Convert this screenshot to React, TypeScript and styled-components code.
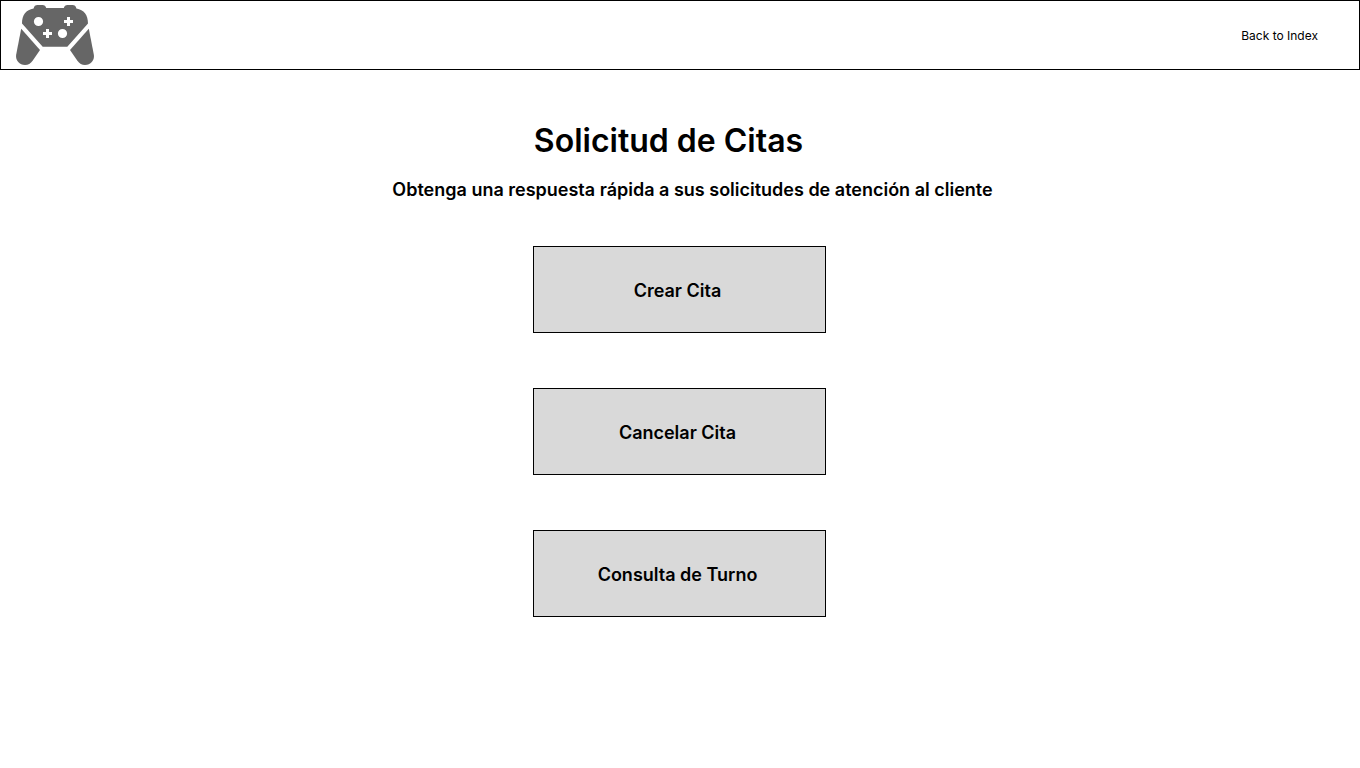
import React from "react";
import styled, { createGlobalStyle } from "styled-components";

const GlobalStyle = createGlobalStyle`
  *, *::before, *::after { box-sizing: border-box; }
  body {
    margin: 0;
    background: #fff;
    color: #000;
    font-family: Inter, "Liberation Sans", sans-serif;
  }
`;

const Header = styled.header`
  display: flex;
  align-items: center;
  justify-content: space-between;
  height: 70px;
  padding: 0 41px 0 14px;
  border: 1px solid #000;
`;

const Logo = styled.svg`
  display: block;
  width: 80px;
  height: 62px;
  fill: #666;
`;

const BackLink = styled.a`
  padding-top: 2px;
  font-size: 12px;
  line-height: 16px;
  color: inherit;
  text-decoration: none;
`;

const Main = styled.main`
  display: flex;
  flex-direction: column;
  align-items: center;
  padding: 50px 17px 56px 16px;
`;

const Title = styled.h1`
  margin: 0;
  padding-right: 22px;
  font-size: 32px;
  font-weight: 600;
  line-height: 42px;
`;

const Subtitle = styled.p`
  margin: 16px 0 0;
  padding-left: 26px;
  font-size: 18px;
  font-weight: 600;
  line-height: 24px;
`;

const Actions = styled.nav`
  display: flex;
  flex-direction: column;
  gap: 55px;
  width: 100%;
  max-width: 293px;
  margin-top: 44px;
`;

const ActionButton = styled.button`
  min-height: 87px;
  padding: 2px 4px 0 0;
  border: 1px solid #000;
  border-radius: 0;
  background: #d9d9d9;
  color: #000;
  font: inherit;
  font-size: 18px;
  font-weight: 600;
  line-height: 24px;
  cursor: pointer;
`;

const actions = ["Crear Cita", "Cancelar Cita", "Consulta de Turno"];

function ControllerLogo() {
  return (
    <Logo viewBox="15 4 80 62" role="img" aria-label="Gamepad">
      <path
        fillRule="evenodd"
        d="M22 23.5C22 15 26 10 33.6 8.6C34 6 35.5 5 37.5 5H42.5C44.5 5 45.7 6 46.2 8H63.8C64.3 6 65.5 5 67.5 5H72.5C74.5 5 76 6 76.4 8.6C84 10 88 15 88 23.5L67.3 46.8H42.7Z
        M38.5 16.9a4.6 4.6 0 1 0 0 9.2a4.6 4.6 0 1 0 0-9.2Z
        M62.5 28.9a4.6 4.6 0 1 0 0 9.2a4.6 4.6 0 1 0 0-9.2Z
        M67 17h3v3h3v3h-3v3h-3v-3h-3v-3h3Z
        M46 29h3v3h3v3h-3v3h-3v-3h-3v-3h3Z"
      />
      <path d="M21.2 28.8L40 50L32.8 60.6C30.5 63.8 28.2 65 25 65C19.5 65 15.4 60.5 16.1 55Z" />
      <path d="M88.8 28.8L70 50L77.2 60.6C79.5 63.8 81.8 65 85 65C90.5 65 94.6 60.5 93.9 55Z" />
    </Logo>
  );
}

export default function App() {
  return (
    <>
      <GlobalStyle />
      <Header>
        <ControllerLogo />
        <BackLink href="#index">Back to Index</BackLink>
      </Header>
      <Main>
        <Title>Solicitud de Citas</Title>
        <Subtitle>Obtenga una respuesta rápida a sus solicitudes de atención al cliente</Subtitle>
        <Actions aria-label="Citas">
          {actions.map((label) => (
            <ActionButton key={label} type="button">
              {label}
            </ActionButton>
          ))}
        </Actions>
      </Main>
    </>
  );
}
